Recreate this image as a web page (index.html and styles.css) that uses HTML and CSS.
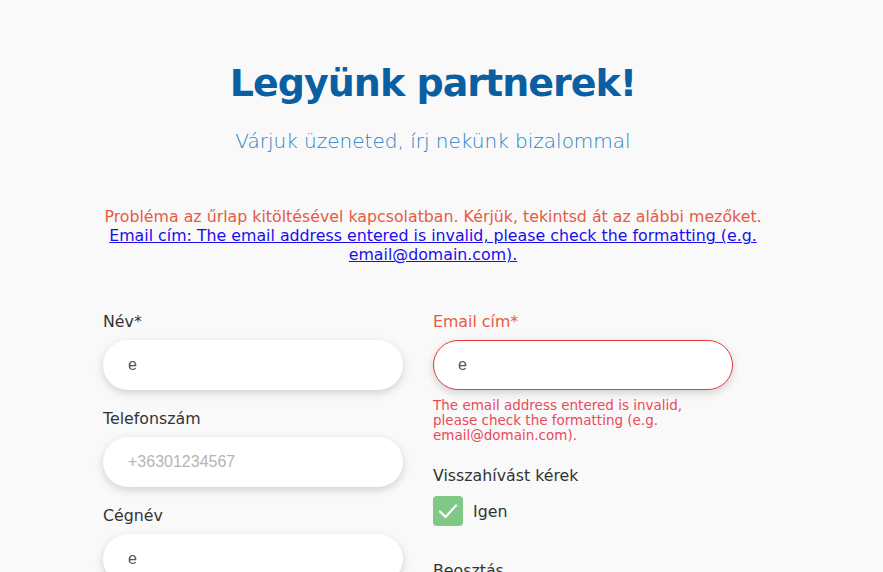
FILE: index.html
```html
<!DOCTYPE html>
<html lang="hu">
<head>
<meta charset="utf-8">
<link rel="stylesheet" href="styles.css">
</head>
<body>
<main class="page">
  <h1 class="title">Legyünk partnerek!</h1>
  <p class="subtitle">Várjuk üzeneted, írj nekünk bizalommal</p>
  <div class="alert">
    <p class="alert-text">Probléma az űrlap kitöltésével kapcsolatban. Kérjük, tekintsd át az alábbi mezőket.</p>
    <a class="alert-link" href="#email">Email cím: The email address entered is invalid, please check the formatting (e.g. email@domain.com).</a>
  </div>
  <form class="form">
    <div class="col">
      <div class="field">
        <label class="label">Név*</label>
        <div class="input">e</div>
      </div>
      <div class="field">
        <label class="label">Telefonszám</label>
        <div class="input placeholder">+36301234567</div>
      </div>
      <div class="field">
        <label class="label">Cégnév</label>
        <div class="input">e</div>
      </div>
    </div>
    <div class="col">
      <div class="field">
        <label class="label label-error">Email cím*</label>
        <div class="input input-error" id="email">e</div>
        <p class="field-error">The email address entered is invalid, please check the formatting (e.g. email@domain.com).</p>
      </div>
      <div class="field field-check">
        <label class="label">Visszahívást kérek</label>
        <div class="check-row">
          <span class="checkbox">
            <svg width="20" height="16" viewBox="0 0 20 16"><path d="M2 8.5 L7.5 14 L18 2.5" fill="none" stroke="#fff" stroke-width="2.2" stroke-linecap="round" stroke-linejoin="round"/></svg>
          </span>
          <span class="check-label">Igen</span>
        </div>
      </div>
      <div class="field field-beo">
        <label class="label">Beosztás</label>
      </div>
    </div>
  </form>
</main>
</body>
</html>
```

FILE: styles.css
```css
html, body {
  margin: 0;
  padding: 0;
  background: #f9f9f9;
  height: 572px;
  overflow: hidden;
}
body {
  font-family: "DejaVu Sans", "Open Sans", sans-serif;
  color: #333;
}
.page {
  width: 660px;
  margin-left: 103px;
  padding-top: 58px;
}
.title {
  margin: 0;
  text-align: center;
  font-size: 38px;
  line-height: 50px;
  font-weight: 600;
  color: #0a5fa3;
  letter-spacing: -1px;
}
.subtitle {
  margin: 20px 0 0;
  text-align: center;
  font-size: 20px;
  line-height: 26px;
  font-weight: 300;
  color: #2a82c4;
}
.alert {
  margin-top: 53px;
  text-align: center;
  font-size: 15.8px;
  line-height: 19px;
}
.alert-text {
  margin: 0;
  color: #e85a43;
}
.alert-link {
  color: #1a0dee;
  text-decoration: underline;
}
.form {
  display: flex;
  gap: 30px;
  margin-top: 48px;
}
.col {
  width: 300px;
  display: flex;
  flex-direction: column;
}
.field {
  display: flex;
  flex-direction: column;
  margin-bottom: 19px;
}
.label {
  font-size: 15.8px;
  line-height: 20px;
  margin-bottom: 8px;
  color: #333;
}
.label-error {
  color: #e85a43;
}
.input {
  height: 50px;
  box-sizing: border-box;
  border-radius: 25px;
  background: #fff;
  box-shadow: 0 3px 8px rgba(0, 0, 0, 0.16);
  padding: 0 25px;
  display: flex;
  align-items: center;
  font-family: "Liberation Sans", Arial, sans-serif;
  font-size: 16px;
  color: #555;
}
.placeholder {
  color: #b5b5b5;
}
.input-error {
  border: 1px solid #e03c3c;
  padding-left: 24px;
}
.field-error {
  margin: 8px 0 0;
  max-width: 270px;
  font-size: 13.5px;
  line-height: 15px;
  color: #ea4a5a;
}
.field-check {
  margin-top: 4px;
}
.check-row {
  display: flex;
  align-items: center;
  gap: 10px;
  margin-top: 2px;
}
.checkbox {
  width: 30px;
  height: 30px;
  border-radius: 4px;
  background: #7fc886;
  display: flex;
  align-items: center;
  justify-content: center;
}
.check-label {
  font-size: 15.8px;
  color: #333;
}
.field-beo {
  margin-top: 16px;
}
```
